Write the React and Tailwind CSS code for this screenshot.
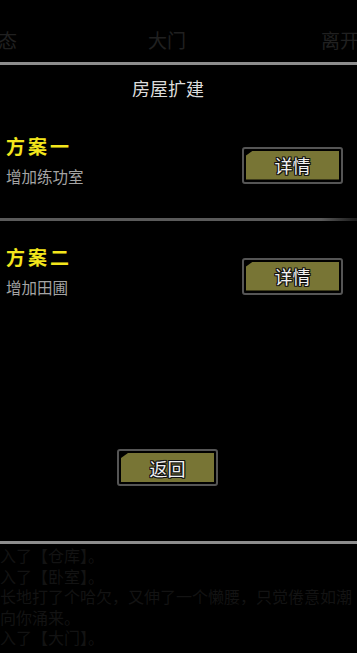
const cjk = { fontFamily: '"Noto Sans CJK SC", "Noto Sans", sans-serif' };

function GameButton({ label }) {
  return (
    <div className="w-[101px] h-[37px] rounded-[3px] border-2 border-[#555555] bg-black p-[2px]">
      <div className="relative h-full w-full bg-[#787535] [clip-path:polygon(7px_0,100%_0,100%_100%,0_100%,0_5px)] flex items-center justify-center">
        <span
          className="text-[18px] leading-none text-[#f2f2f2] [text-shadow:-1px_-1px_0_#111,1px_-1px_0_#111,-1px_1px_0_#111,1px_1px_0_#111,0_1px_0_#111,0_-1px_0_#111,1px_0_0_#111,-1px_0_0_#111]"
          style={cjk}
        >
          {label}
        </span>
      </div>
    </div>
  );
}

function Plan({ title, desc }) {
  return (
    <div className="flex items-center justify-between pl-[6px] pr-[14px]">
      <div>
        <div className="text-[19px] leading-[24px] font-bold text-[#f3e61c] tracking-[3px]" style={cjk}>{title}</div>
        <div className="mt-[8px] text-[15.5px] leading-[20px] text-[#a4a4a4]" style={cjk}>{desc}</div>
      </div>
      <div className="mt-[10px]">
        <GameButton label="详情" />
      </div>
    </div>
  );
}

export default function App() {
  const logs = [
    "入了【仓库】。",
    "入了【卧室】。",
    "长地打了个哈欠，又伸了一个懒腰，只觉倦意如潮",
    "向你涌来。",
    "入了【大门】。",
  ];
  return (
    <div className="w-[357px] h-[653px] bg-black overflow-hidden flex flex-col" style={cjk}>
      <div className="h-[62px] flex items-end justify-between pb-[10px] text-[19px] leading-[24px] text-[#202020]">
        <span className="-ml-[2px]">态</span>
        <span className="-ml-[4px]">大门</span>
        <span className="-mr-[2px]">离开</span>
      </div>
      <div className="h-[3px] bg-[#8d8d8d]" />
      <div className="mt-[11px] pr-[21px] text-center text-[18px] leading-[24px] text-[#dcdcdc]">房屋扩建</div>

      <div className="mt-[34px]">
        <Plan title="方案一" desc="增加练功室" />
      </div>
      <div className="mt-[32px] h-[3px] bg-gradient-to-r from-[#5a5a5a] via-[#5a5a5a] via-90% to-[#1a1a1a]" />

      <div className="mt-[24px]">
        <Plan title="方案二" desc="增加田圃" />
      </div>

      <div className="mt-[152px] flex justify-center pr-[22px]">
        <GameButton label="返回" />
      </div>

      <div className="mt-[55px] h-[3px] bg-[#8d8d8d]" />
      <div className="mt-[1px] text-[16px] leading-[20.5px] text-[#131313] whitespace-nowrap">
        {logs.map((l, i) => (
          <div key={i}>{l}</div>
        ))}
      </div>
    </div>
  );
}
